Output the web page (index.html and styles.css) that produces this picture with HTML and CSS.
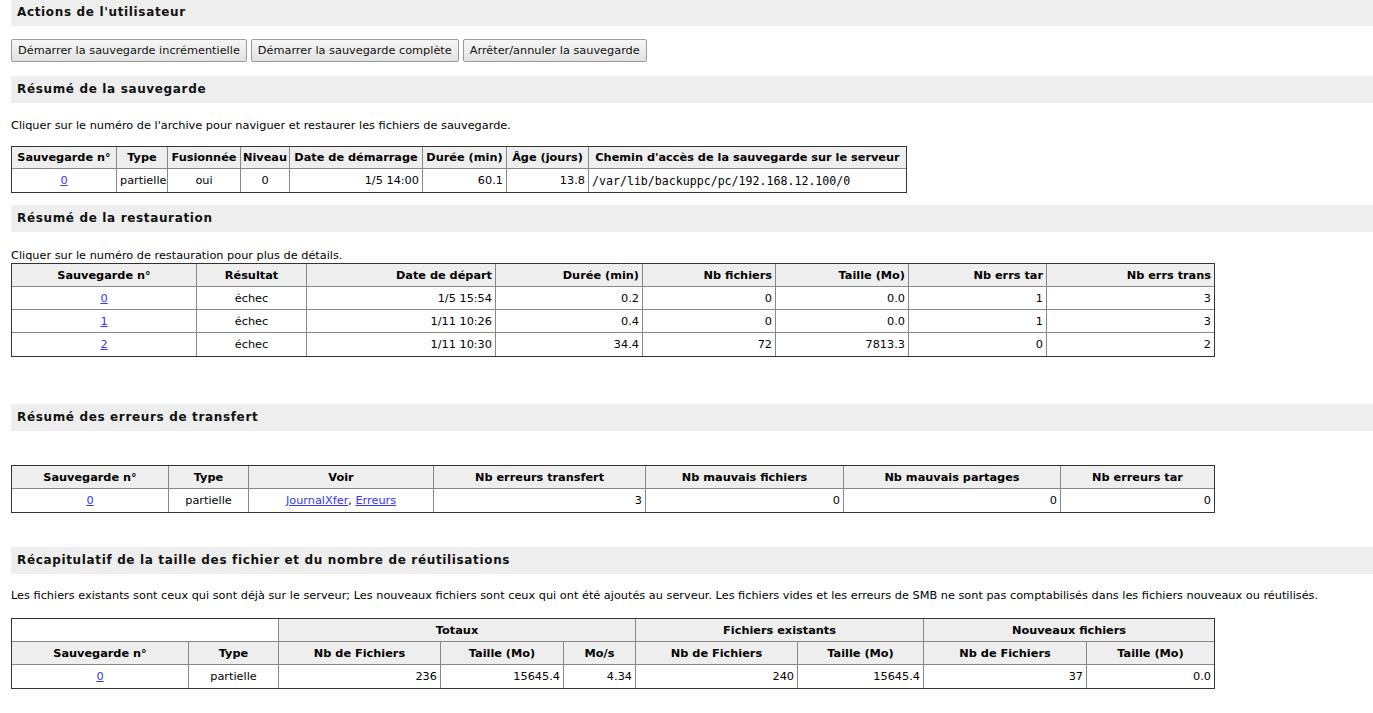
FILE: index.html
```html
<!DOCTYPE html>
<html lang="fr">
<head>
<meta charset="utf-8">
<title>BackupPC</title>
<link rel="stylesheet" href="styles.css">
</head>
<body>
<div class="bar bar-first">Actions de l'utilisateur</div>
<div class="actions">
  <button class="btn" type="button">Démarrer la sauvegarde incrémentielle</button>
  <button class="btn" type="button">Démarrer la sauvegarde complète</button>
  <button class="btn" type="button">Arrêter/annuler la sauvegarde</button>
</div>

<div class="bar bar-2">Résumé de la sauvegarde</div>
<p class="note note-1">Cliquer sur le numéro de l'archive pour naviguer et restaurer les fichiers de sauvegarde.</p>
<table class="grid t1">
  <colgroup><col class="c105"><col class="c51"><col class="c73"><col class="c49"><col class="c133"><col class="c84"><col class="c82"><col class="c317"></colgroup>
  <tr class="head"><th>Sauvegarde n°</th><th>Type</th><th>Fusionnée</th><th>Niveau</th><th>Date de démarrage</th><th>Durée (min)</th><th>Âge (jours)</th><th>Chemin d'accès de la sauvegarde sur le serveur</th></tr>
  <tr><td class="c"><a href="#">0</a></td><td class="l">partielle</td><td class="c">oui</td><td class="c">0</td><td class="r">1/5 14:00</td><td class="r">60.1</td><td class="r">13.8</td><td class="l mono">/var/lib/backuppc/pc/192.168.12.100/0</td></tr>
</table>

<div class="bar bar-3">Résumé de la restauration</div>
<p class="note note-2">Cliquer sur le numéro de restauration pour plus de détails.</p>
<table class="grid wide t2">
  <colgroup><col class="c185"><col class="c110"><col class="c189"><col class="c147"><col class="c133"><col class="c133"><col class="c138"><col class="c167"></colgroup>
  <tr class="head"><th>Sauvegarde n°</th><th>Résultat</th><th class="r">Date de départ</th><th class="r">Durée (min)</th><th class="r">Nb fichiers</th><th class="r">Taille (Mo)</th><th class="r">Nb errs tar</th><th class="r">Nb errs trans</th></tr>
  <tr><td class="c"><a href="#">0</a></td><td class="c">échec</td><td class="r">1/5 15:54</td><td class="r">0.2</td><td class="r">0</td><td class="r">0.0</td><td class="r">1</td><td class="r">3</td></tr>
  <tr><td class="c"><a href="#">1</a></td><td class="c">échec</td><td class="r">1/11 10:26</td><td class="r">0.4</td><td class="r">0</td><td class="r">0.0</td><td class="r">1</td><td class="r">3</td></tr>
  <tr><td class="c"><a href="#">2</a></td><td class="c">échec</td><td class="r">1/11 10:30</td><td class="r">34.4</td><td class="r">72</td><td class="r">7813.3</td><td class="r">0</td><td class="r">2</td></tr>
</table>

<div class="bar bar-4">Résumé des erreurs de transfert</div>
<table class="grid wide t3">
  <colgroup><col class="c157"><col class="c80"><col class="c185"><col class="c212"><col class="c198"><col class="c217"><col class="c153"></colgroup>
  <tr class="head"><th>Sauvegarde n°</th><th>Type</th><th>Voir</th><th>Nb erreurs transfert</th><th>Nb mauvais fichiers</th><th>Nb mauvais partages</th><th>Nb erreurs tar</th></tr>
  <tr><td class="c"><a href="#">0</a></td><td class="c">partielle</td><td class="c"><a href="#">JournalXfer</a>, <a href="#">Erreurs</a></td><td class="r">3</td><td class="r">0</td><td class="r">0</td><td class="r">0</td></tr>
</table>

<div class="bar bar-5">Récapitulatif de la taille des fichier et du nombre de réutilisations</div>
<p class="note note-3">Les fichiers existants sont ceux qui sont déjà sur le serveur; Les nouveaux fichiers sont ceux qui ont été ajoutés au serveur. Les fichiers vides et les erreurs de SMB ne sont pas comptabilisés dans les fichiers nouveaux ou réutilisés.</p>
<table class="grid wide t4">
  <colgroup><col class="c177"><col class="c90"><col class="c162"><col class="c123"><col class="c72"><col class="c162"><col class="c126"><col class="c163"><col class="c127"></colgroup>
  <tr class="head"><th colspan="2" class="blank"></th><th colspan="3">Totaux</th><th colspan="2">Fichiers existants</th><th colspan="2">Nouveaux fichiers</th></tr>
  <tr class="head"><th>Sauvegarde n°</th><th>Type</th><th>Nb de Fichiers</th><th>Taille (Mo)</th><th>Mo/s</th><th>Nb de Fichiers</th><th>Taille (Mo)</th><th>Nb de Fichiers</th><th>Taille (Mo)</th></tr>
  <tr><td class="c"><a href="#">0</a></td><td class="c">partielle</td><td class="r">236</td><td class="r">15645.4</td><td class="r">4.34</td><td class="r">240</td><td class="r">15645.4</td><td class="r">37</td><td class="r">0.0</td></tr>
</table>
</body>
</html>
```

FILE: styles.css
```css
html, body {
  margin: 0;
  padding: 0;
  background: #ffffff;
}
body {
  padding: 0 0 20px 11px;
  font-family: "DejaVu Sans", sans-serif;
  font-size: 11.3px;
  color: #000;
}
.bar {
  background: #eeeeee;
  height: 27px;
  line-height: 27px;
  padding-left: 6px;
  font-family: "DejaVu Sans", sans-serif;
  font-weight: bold;
  font-size: 12px;
  letter-spacing: 0.65px;
  color: #111;
}
.bar-first { height: 26px; line-height: 25px; }
.bar-2 { margin-top: 14px; }
.bar-3 { margin-top: 12px; }
.bar-4 { margin-top: 47px; }
.bar-5 { margin-top: 34px; }

.actions {
  display: flex;
  gap: 4px;
  margin-top: 13px;
}
.btn {
  height: 23px;
  padding: 0 6px;
  font-family: "DejaVu Sans", sans-serif;
  font-size: 11.3px;
  color: #111;
  background: linear-gradient(#f6f6f6, #e2e2e2);
  border: 1px solid #9a9a9a;
  border-radius: 2px;
}

.note {
  margin: 0;
  line-height: 15px;
}
.note-1 { margin-top: 15px; margin-bottom: 13px; }
.note-2 { margin-top: 16px; margin-bottom: 0; }
.note-3 { margin-top: 14px; margin-bottom: 15px; }

.grid {
  border-collapse: separate;
  border-spacing: 0;
  border: 1px solid #333;
  table-layout: fixed;
}
.wide { width: 1202px; }
.t1 { width: 894px; margin-top: 0; }
.t3 { margin-top: 34px; }

.grid th, .grid td {
  height: 22px;
  padding: 0 3px;
  border-right: 1px solid #888;
  border-bottom: 1px solid #888;
  white-space: nowrap;
  overflow: hidden;
  box-sizing: border-box;
}
.grid th:last-child, .grid td:last-child { border-right: none; }
.grid tr:last-child td { border-bottom: none; }
.grid .head th {
  background: #eeeeee;
  font-weight: bold;
  text-align: center;
}
.grid .head th.blank { background: #fff; }
.grid .head th.r { text-align: right; }
.t1 .head th { padding: 0 1px; height: 22px; }
.grid td { height: 23px; }
.t2 .head th, .t3 .head th, .t4 .head th { height: 23px; }
.c { text-align: center; }
.r { text-align: right; }
.l { text-align: left; }
.mono {
  font-family: "DejaVu Sans Mono", monospace;
  font-size: 11.6px;
}
a { color: #3333ff; text-decoration: underline; }

.c49 { width: 49px; } .c51 { width: 51px; } .c72 { width: 72px; } .c73 { width: 73px; }
.c80 { width: 80px; } .c82 { width: 82px; } .c84 { width: 84px; } .c90 { width: 90px; }
.c105 { width: 105px; } .c110 { width: 110px; } .c123 { width: 123px; } .c126 { width: 126px; }
.c127 { width: 127px; } .c133 { width: 133px; } .c138 { width: 138px; } .c147 { width: 147px; }
.c153 { width: 153px; } .c157 { width: 157px; } .c162 { width: 162px; } .c163 { width: 163px; }
.c167 { width: 167px; } .c177 { width: 177px; } .c185 { width: 185px; } .c189 { width: 189px; }
.c198 { width: 198px; } .c212 { width: 212px; } .c217 { width: 217px; } .c317 { width: 317px; }
```
